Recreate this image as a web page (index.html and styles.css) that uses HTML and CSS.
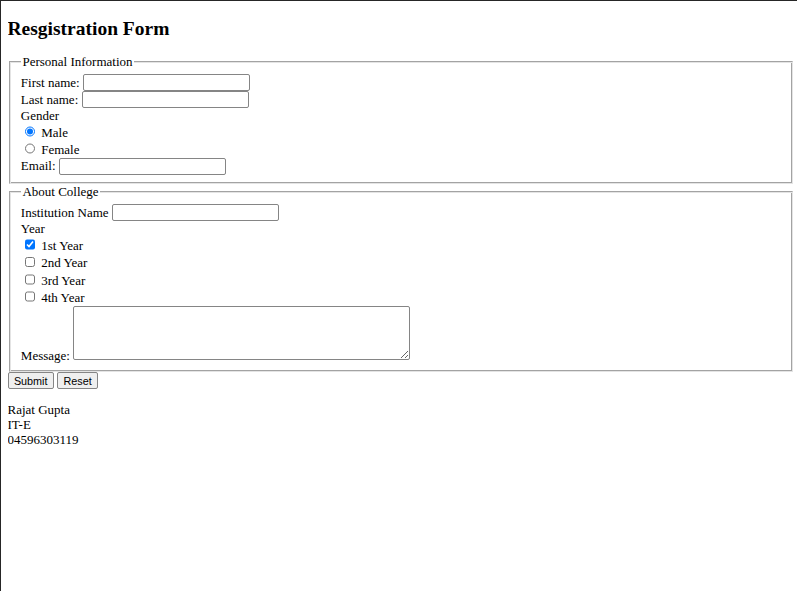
FILE: index.html
```html
<!DOCTYPE html>
<html lang="en">
<head>
<meta charset="utf-8">
<title>Registration Form</title>
<link rel="stylesheet" href="styles.css">
</head>
<body>
<h2 class="title">Resgistration Form</h2>
<form class="form">
<fieldset class="group">
<legend class="legend">Personal Information</legend>
<label>First name: <input class="field" type="text"></label><br>
<label>Last name: <input class="field" type="text"></label><br>
Gender<br>
<label><input class="choice" type="radio" name="gender" checked> Male</label><br>
<label><input class="choice" type="radio" name="gender"> Female</label><br>
<label>Email: <input class="field" type="email"></label><br>
</fieldset>
<fieldset class="group">
<legend class="legend">About College</legend>
<label>Institution Name <input class="field" type="text"></label><br>
Year<br>
<label><input class="choice" type="checkbox" checked> 1st Year</label><br>
<label><input class="choice" type="checkbox"> 2nd Year</label><br>
<label><input class="choice" type="checkbox"> 3rd Year</label><br>
<label><input class="choice" type="checkbox"> 4th Year</label><br>
<label>Message: <textarea class="message"></textarea></label>
</fieldset>
<input class="btn" type="submit" value="Submit"> <input class="btn" type="reset" value="Reset">
</form>
<p class="info">Rajat Gupta<br>IT-E<br>04596303119</p>
</body>
</html>
```
FILE: styles.css
```css
html {
  border-top: 1px solid #262626;
  border-left: 1px solid #262626;
  min-height: 100vh;
  box-sizing: border-box;
  background: #fff;
}

body {
  margin: 6.5px 2.4px 6.5px 6.5px;
  font-family: "Liberation Serif", "Times New Roman", serif;
  font-size: 13px;
  line-height: 15px;
  color: #000;
}

.title {
  font-size: 19.5px;
  line-height: 22px;
  font-weight: bold;
  margin: 10px 0 14.7px;
}

.form {
  margin: 0;
}

.group {
  margin: 0 1.6px;
  padding: 5px 9.75px 8.7px 10.75px;
  border: 1px solid;
  border-color: #a3a3a3 #e4e4e4 #e4e4e4 #a3a3a3;
  box-shadow: inset 1px 1px #e4e4e4, inset -1px -1px #a3a3a3;
}

.legend {
  padding: 0 1.6px;
  background: #fff;
}

.field {
  width: 167px;
  height: 17px;
  box-sizing: border-box;
  margin: 0;
  padding: 1px 2px;
  border: 1px solid #858585;
  border-radius: 2px;
  font: 10.8px "Liberation Sans", Arial, sans-serif;
  background: #fff;
}

.choice {
  width: 10.6px;
  height: 10.6px;
  margin: 3px 2.5px 3.7px 4px;
}

.message {
  width: 337px;
  height: 54px;
  box-sizing: border-box;
  margin: 0;
  padding: 1.6px;
  border: 1px solid #858585;
  border-radius: 2px;
  font: 10.8px "Liberation Mono", monospace;
}

.btn {
  height: 17px;
  box-sizing: border-box;
  margin: 0;
  padding: 0 5.4px;
  border: 1px solid #858585;
  border-radius: 2px;
  background: #efefef;
  color: #000;
  font: 10.8px "Liberation Sans", Arial, sans-serif;
}

.info {
  margin: 13px 0;
}
```
